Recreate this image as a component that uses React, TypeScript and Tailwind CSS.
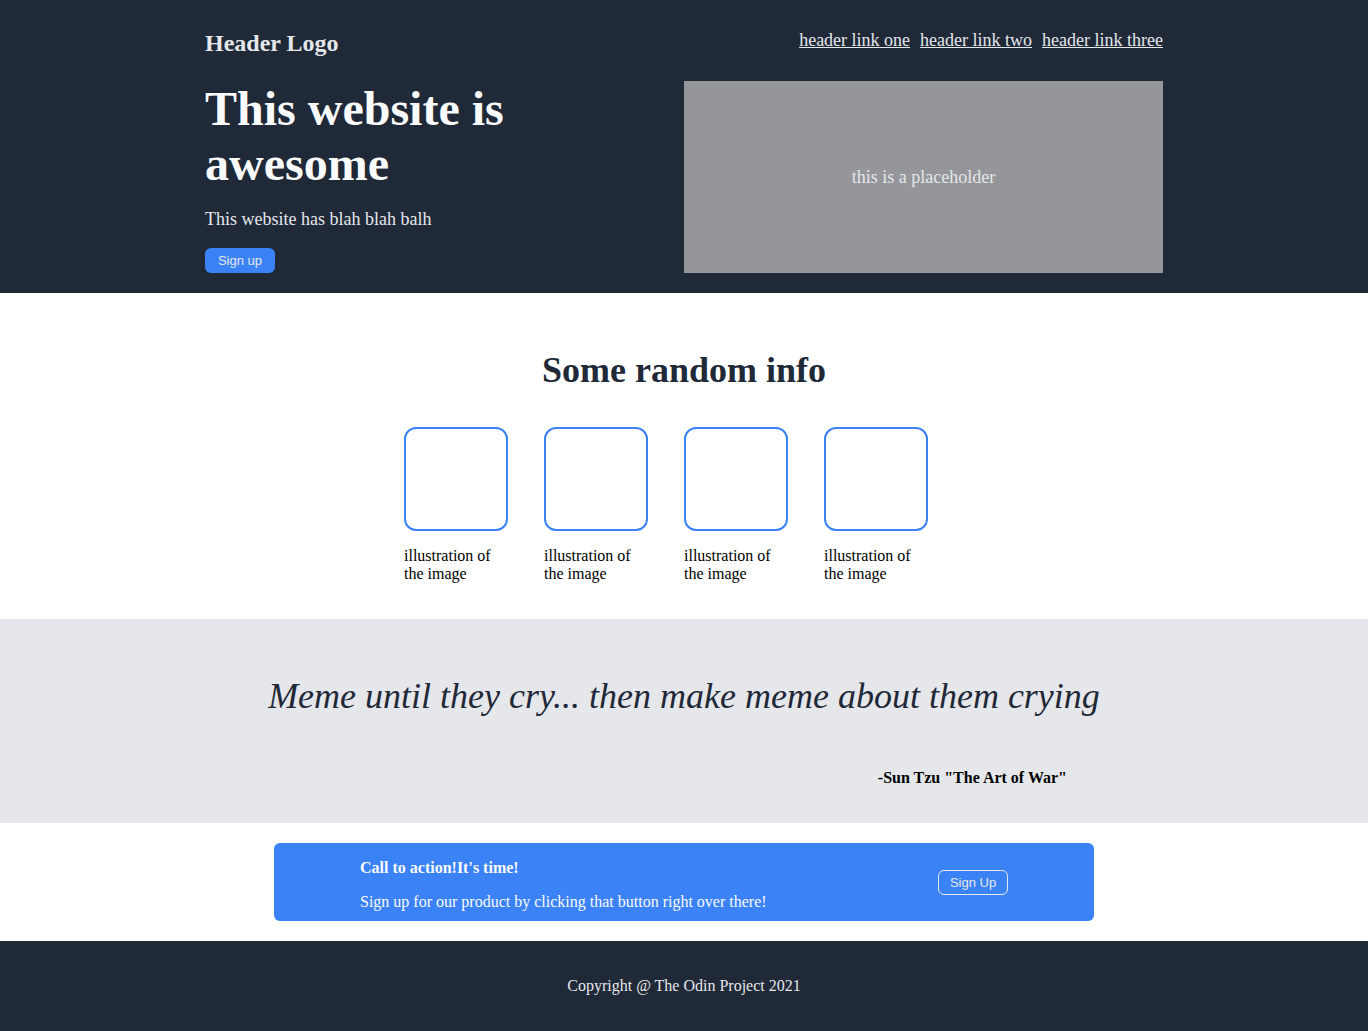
import React from "react";

const serif = { fontFamily: '"Liberation Serif", "Times New Roman", serif' };

export default function App() {
  return (
    <div className="min-h-screen bg-white font-['Liberation_Serif',serif]">
      {/* Header / hero */}
      <header className="bg-[#1f2937]">
        <div className="w-[958px] mx-auto pt-[26px] pb-[20px]">
          <div className="flex justify-between items-start">
            <div className="mt-px text-2xl font-bold text-[#e5e7eb]">Header Logo</div>
            <nav className="flex gap-[10px] text-lg text-[#e5e7eb]">
              <a href="#" className="underline">header link one</a>
              <a href="#" className="underline">header link two</a>
              <a href="#" className="underline">header link three</a>
            </nav>
          </div>
          <div className="grid grid-cols-2 mt-[22px]">
            <div className="flex flex-col items-start">
              <h1 className="text-[48px] leading-[55px] font-bold text-[#f9fafb]">
                This website is
                <br />
                awesome
              </h1>
              <p className="mt-[14px] text-lg text-[#e5e7eb]">This website has blah blah balh</p>
              <button className="mt-[15px] h-[25px] w-[70px] rounded-md bg-[#3b82f6] text-[13px] text-[#e5e7eb] font-['Liberation_Sans',sans-serif]">
                Sign up
              </button>
            </div>
            <div className="h-[192px] bg-[#95969a] flex items-center justify-center text-lg text-[#e5e7eb]">
              this is a placeholder
            </div>
          </div>
        </div>
      </header>

      {/* Info */}
      <section className="bg-white pt-[57px] pb-[36px]">
        <h2 className="text-4xl font-bold text-[#1f2937] text-center">Some random info</h2>
        <div className="mt-[37px] flex justify-center">
          {[0, 1, 2, 3].map((i) => (
            <div key={i} className="w-[140px]">
              <div className="w-[104px] h-[104px] border-2 border-[#3b82f6] rounded-xl" />
              <p className="mt-[16px] w-[104px] text-base leading-[18px] text-black">
                illustration of the image
              </p>
            </div>
          ))}
        </div>
      </section>

      {/* Quote */}
      <section className="bg-[#e5e7eb] pt-[57px] pb-[33px]">
        <p className="text-4xl italic text-[#1f2937] text-center">
          Meme until they cry... then make meme about them crying
        </p>
        <div className="w-[766px] mx-auto mt-[50px] text-right font-bold text-black">
          -Sun Tzu "The Art of War"
        </div>
      </section>

      {/* CTA */}
      <section className="bg-white py-5">
        <div className="w-[820px] h-[78px] mx-auto bg-[#3b82f6] rounded-md px-[86px] pt-[13px] flex items-start justify-between text-[#f9fafb]">
          <div className="flex flex-col gap-[10px]">
            <div className="font-bold">Call to action!It's time!</div>
            <div>Sign up for our product by clicking that button right over there!</div>
          </div>
          <button className="mt-[14px] h-[25px] w-[70px] border border-[#e5e7eb] rounded-md text-[13px] text-[#e5e7eb] font-['Liberation_Sans',sans-serif]">
            Sign Up
          </button>
        </div>
      </section>

      {/* Footer */}
      <footer className="bg-[#1f2937] h-[90px] flex items-center justify-center text-[#e5e7eb]" style={serif}>
        Copyright @ The Odin Project 2021
      </footer>
    </div>
  );
}
